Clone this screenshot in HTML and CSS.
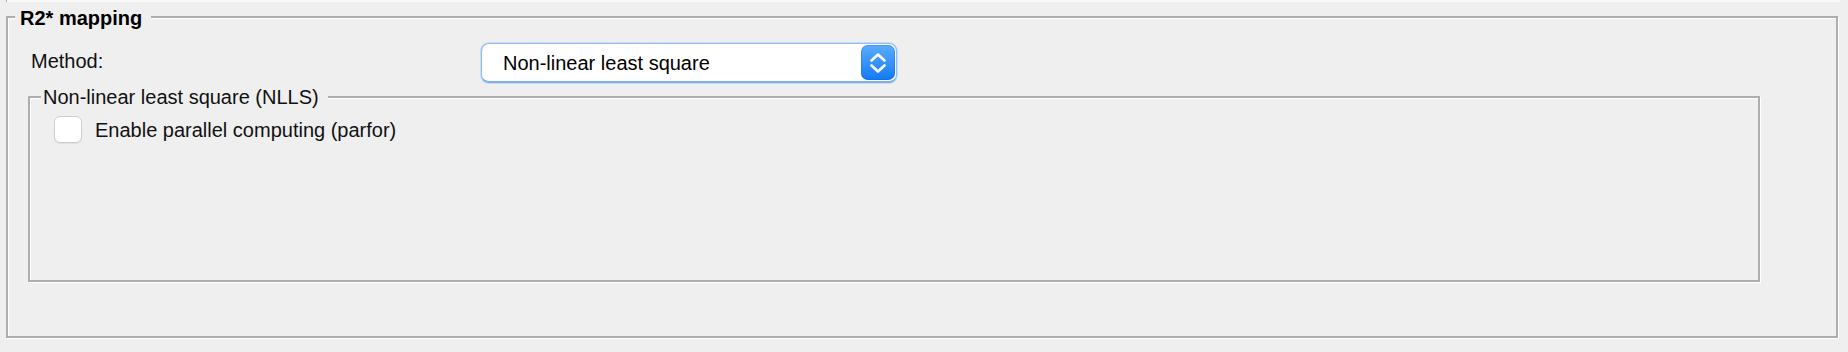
FILE: index.html
```html
<!DOCTYPE html>
<html lang="en">
<head>
<meta charset="utf-8">
<title>R2* mapping</title>
<link rel="stylesheet" href="styles.css">
</head>
<body>
<div class="top-edge"></div>
<fieldset class="group outer">
  <legend class="outer-title">R2* mapping</legend>
  <div class="outer-body">
    <div class="method-row">
      <span class="method-label">Method:</span>
      <div class="select">
        <span class="select-text">Non-linear least square</span>
        <span class="select-btn">
          <svg width="34" height="35" viewBox="0 0 34 35" aria-hidden="true">
            <path d="M10.5 15.5 L17 9.5 L23.5 15.5" fill="none" stroke="#fff" stroke-width="2.6" stroke-linecap="round" stroke-linejoin="round"/>
            <path d="M10.5 20.5 L17 26.5 L23.5 20.5" fill="none" stroke="#fff" stroke-width="2.6" stroke-linecap="round" stroke-linejoin="round"/>
          </svg>
        </span>
      </div>
    </div>
    <fieldset class="group inner">
      <legend class="inner-title">Non-linear least square (NLLS)</legend>
      <div class="inner-body">
        <label class="check">
          <span class="check-box"></span>
          <span class="check-text">Enable parallel computing (parfor)</span>
        </label>
      </div>
    </fieldset>
  </div>
</fieldset>
</body>
</html>
```

FILE: styles.css
```css
html, body {
  margin: 0;
  padding: 0;
  background: #efefef;
}

body {
  width: 1848px;
  height: 352px;
  overflow: hidden;
  font-family: "Liberation Sans", Arial, Helvetica, sans-serif;
  font-size: 20px;
  line-height: 20px;
  color: #111;
}

.top-edge {
  height: 2px;
  margin-left: 6px;
  width: 1833px;
  background: #f9f9f9;
  border-left: 1px solid #b0b0b0;
}

.group {
  margin: 0;
  padding: 0;
  min-width: 0;
  border: 2px solid #adadad;
  box-shadow: inset 1px 1px 0 #ffffff, 1px 1px 0 #ffffff;
}

.outer {
  margin: 4px 10px 0 6px;
}

.outer-title {
  margin-left: 7px;
  padding: 2px 9px 0 5px;
  font-weight: bold;
  font-size: 20px;
  line-height: 20px;
  color: #000;
  background: #efefef;
}

.outer-body {
  padding: 15px 0 54px 0;
}

.method-row {
  display: grid;
  grid-template-columns: 450px 416px;
  align-items: start;
  height: 40px;
  padding-left: 23px;
}

.method-label {
  padding-top: 8px;
}

.select {
  box-sizing: border-box;
  height: 40px;
  display: flex;
  align-items: center;
  justify-content: space-between;
  padding: 0 1px 0 21px;
  background: #ffffff;
  border: 1px solid #94bced;
  border-bottom: 2px solid #82ade8;
  border-radius: 8px;
  box-shadow: 0 0 0 1px #c6dbf7;
}

.select-text {
  color: #000;
}

.select-btn {
  width: 34px;
  height: 35px;
  border-radius: 7px;
  background: linear-gradient(#5aaeff, #1479f5);
  display: flex;
  flex-shrink: 0;
  box-shadow: inset 0 0 0 1px rgba(0, 80, 200, 0.25);
}

.select-btn svg {
  display: block;
}

.inner {
  margin: 4px 76px 0 20px;
}

.inner-title {
  margin-left: 11px;
  padding: 0 9px 0 2px;
  font-size: 20px;
  line-height: 20px;
  color: #111;
  background: #efefef;
}

.inner-body {
  box-sizing: border-box;
  height: 173px;
  padding: 9px 0 0 24px;
}

.check {
  display: flex;
  align-items: center;
  gap: 13px;
}

.check-box {
  box-sizing: border-box;
  width: 28px;
  height: 27px;
  background: #ffffff;
  border: 1px solid #cdcdcd;
  border-radius: 6px;
  box-shadow: 0 1px 1px rgba(0, 0, 0, 0.06);
}

.check-text {
  color: #111;
}
```
